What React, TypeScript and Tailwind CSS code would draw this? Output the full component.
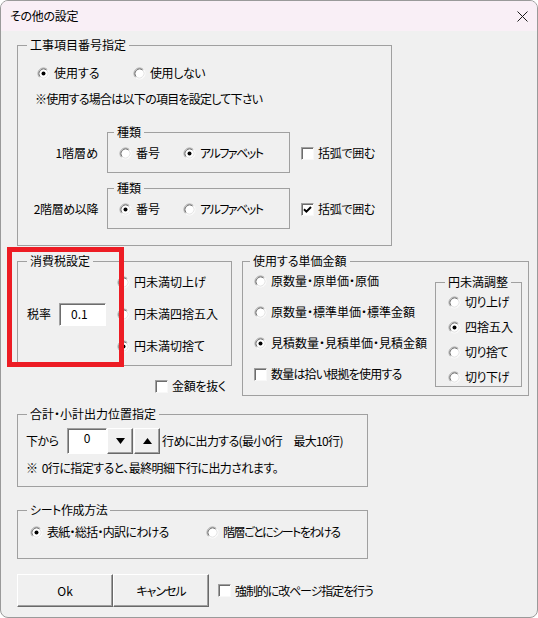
import React from "react";
import clsx from "clsx";

const RadioIcon = ({ checked }: { checked?: boolean }) => (
  <svg width="13" height="13" viewBox="0 0 13 13" className="shrink-0">
    <circle cx="6.5" cy="6.5" r="5" fill="#fff" />
    <path d="M2.61 10.39 A5.5 5.5 0 0 1 10.39 2.61" stroke="#a0a0a0" fill="none" />
    <path d="M10.39 2.61 A5.5 5.5 0 0 1 2.61 10.39" stroke="#ffffff" fill="none" />
    <path d="M3.32 9.68 A4.5 4.5 0 0 1 9.68 3.32" stroke="#6d6d6d" fill="none" />
    <path d="M9.68 3.32 A4.5 4.5 0 0 1 3.32 9.68" stroke="#e3e3e3" fill="none" />
    {checked && <circle cx="6.5" cy="6.5" r="2" fill="#000" />}
  </svg>
);

const Radio = ({ label, checked, className }: { label: string; checked?: boolean; className?: string }) => (
  <div className={clsx("flex items-center h-4 leading-4 whitespace-nowrap", className)}>
    <RadioIcon checked={checked} />
    <span className="ml-[4px]">{label}</span>
  </div>
);

const Checkbox = ({ label, checked, className }: { label: string; checked?: boolean; className?: string }) => (
  <div className={clsx("flex items-center h-4 leading-4 whitespace-nowrap", className)}>
    <div className="w-[13px] h-[13px] shrink-0 bg-white border border-[#a0a0a0] border-b-[#f8f8f8] border-r-[#f8f8f8] shadow-[inset_1px_1px_0_#6d6d6d] flex items-center justify-center">
      {checked && (
        <svg width="9" height="9" viewBox="0 0 9 9">
          <path d="M1 4.2 L3.4 6.6 L8 2" stroke="#000" strokeWidth="2" fill="none" />
        </svg>
      )}
    </div>
    <span className="ml-[4px]">{label}</span>
  </div>
);

const Group = ({
  title,
  className,
  legendClass,
  children,
}: {
  title: string;
  className?: string;
  legendClass?: string;
  children?: React.ReactNode;
}) => (
  <fieldset className={clsx("border border-[#a0a0a0] min-w-0 shrink-0", className)}>
    <legend className={clsx("px-[3px] leading-4", legendClass ?? "ml-[9px]")}>{title}</legend>
    {children}
  </fieldset>
);

const btn3d =
  "bg-[#f0f0f0] border border-t-white border-l-white border-b-[#696969] border-r-[#696969] shadow-[inset_-1px_-1px_0_#a0a0a0]";

const sunken =
  "bg-white border border-[#a0a0a0] border-b-white border-r-white shadow-[inset_1px_1px_0_#6d6d6d]";

export default function App() {
  return (
    <div className="relative w-[538px] h-[618px] bg-[#f0f0f0] border border-[#9a9a9a] rounded-[8px] overflow-hidden text-[12px] text-black font-['Noto_Sans_CJK_JP','Noto_Sans',sans-serif] [font-feature-settings:'palt']">
      {/* Title bar */}
      <div className="h-[30px] bg-[#f9eff6] flex items-center justify-between pl-[9px] pr-[9px]">
        <span className="leading-4 tracking-[-0.3px]">その他の設定</span>
        <svg width="11" height="11" viewBox="0 0 11 11">
          <path d="M0.5 0.5 L10.5 10.5 M10.5 0.5 L0.5 10.5" stroke="#1a1a1a" strokeWidth="1" />
        </svg>
      </div>

      <div className="pl-[16px]">
        {/* 工事項目番号指定 */}
        <Group title="工事項目番号指定" className="w-[375px] h-[209px] mt-[6px]">
          <div className="flex ml-[19px] mt-[12px]">
            <Radio label="使用する" checked className="w-[96px]" />
            <Radio label="使用しない" className="tracking-[-0.4px]" />
          </div>
          <div className="ml-[17px] mt-[10px] leading-4 tracking-[-0.75px]">※使用する場合は以下の項目を設定して下さい</div>

          <div className="flex items-start mt-[17px]">
            <div className="w-[80px] mr-[9px] mt-[21px] text-right leading-4">1階層め</div>
            <Group title="種類" className="w-[183px] h-[49px]" legendClass="ml-[6px]">
              <div className="flex ml-[11px] mt-[5px]">
                <Radio label="番号" className="w-[64px]" />
                <Radio label="アルファベット" checked className="tracking-[-1.5px]" />
              </div>
            </Group>
            <Checkbox label="括弧で囲む" className="ml-[11px] mt-[21px] tracking-[-0.3px]" />
          </div>

          <div className="flex items-start mt-[7px]">
            <div className="w-[80px] mr-[9px] mt-[21px] text-right leading-4 tracking-[-0.4px]">2階層め以降</div>
            <Group title="種類" className="w-[183px] h-[49px]" legendClass="ml-[6px]">
              <div className="flex ml-[11px] mt-[5px]">
                <Radio label="番号" checked className="w-[64px]" />
                <Radio label="アルファベット" className="tracking-[-1.5px]" />
              </div>
            </Group>
            <Checkbox label="括弧で囲む" checked className="ml-[11px] mt-[21px] tracking-[-0.3px]" />
          </div>
        </Group>

        {/* 消費税 / 単価金額 */}
        <div className="flex items-start mt-[7px]">
          <div className="w-[215px] shrink-0">
            <Group title="消費税設定" className="w-[215px] h-[113px]">
              <div className="flex items-center ml-[9px] mt-[5px]">
                <span className="leading-4 w-[32px]">税率</span>
                <div className={clsx(sunken, "w-[47px] h-[23px] pl-[11px] flex items-center leading-4")}>0.1</div>
                <div className="flex flex-col gap-[16px] ml-[11px]">
                  <Radio label="円未満切上げ" />
                  <Radio label="円未満四捨五入" />
                  <Radio label="円未満切捨て" checked />
                </div>
              </div>
            </Group>
            <Checkbox label="金額を抜く" className="ml-[138px] mt-[12px] tracking-[-0.3px]" />
          </div>

          <Group title="使用する単価金額" className="w-[287px] h-[143px] ml-[10px]" legendClass="ml-[7px]">
            <div className="flex items-start">
              <div className="w-[181px] ml-[11px] mt-[4px] flex flex-col gap-[15px]">
                <Radio label="原数量・原単価・原価" />
                <Radio label="原数量・標準単価・標準金額" />
                <Radio label="見積数量・見積単価・見積金額" checked />
                <Checkbox label="数量は拾い根拠を使用する" className="tracking-[-0.8px]" />
              </div>
              <Group title="円未満調整" className="w-[87px] h-[113px] mt-[5px]" legendClass="ml-[9px]">
                <div className="ml-[12px] mt-[4px] flex flex-col gap-[9px]">
                  <Radio label="切り上げ" className="tracking-[-0.5px]" />
                  <Radio label="四捨五入" checked />
                  <Radio label="切り捨て" className="tracking-[-0.5px]" />
                  <Radio label="切り下げ" className="tracking-[-0.5px]" />
                </div>
              </Group>
            </div>
          </Group>
        </div>

        {/* 合計・小計出力位置指定 */}
        <Group title="合計・小計出力位置指定" className="w-[351px] h-[81px] mt-[10px]">
          <div className="flex items-center ml-[8px] mt-[6px]">
            <span className="w-[41px] leading-4 tracking-[-0.5px]">下から</span>
            <div className={clsx(sunken, "w-[40px] h-[26px] text-center pt-[1px] leading-4")}>0</div>
            <button className={clsx(btn3d, "w-[26px] h-[26px] flex items-center justify-center")}>
              <svg width="9" height="6" viewBox="0 0 9 6">
                <path d="M0 0 H9 L4.5 6 Z" fill="#000" />
              </svg>
            </button>
            <button className={clsx(btn3d, "w-[26px] h-[26px] ml-[1px] flex items-center justify-center")}>
              <svg width="9" height="6" viewBox="0 0 9 6">
                <path d="M0 6 H9 L4.5 0 Z" fill="#000" />
              </svg>
            </button>
            <span className="ml-[2px] leading-4 whitespace-nowrap tracking-[-0.65px]">行めに出力する(最小0行　最大10行)</span>
          </div>
          <div className="ml-[8px] mt-[6px] leading-4 tracking-[-0.55px] whitespace-pre">※  0行に指定すると、最終明細下行に出力されます。</div>
        </Group>

        {/* シート作成方法 */}
        <Group title="シート作成方法" className="w-[351px] h-[57px] mt-[15px]" legendClass="ml-[9px] tracking-[-0.4px]">
          <div className="flex ml-[12px] mt-[6px]">
            <Radio label="表紙・総括・内訳にわける" checked className="w-[176px] tracking-[-0.7px]" />
            <Radio label="階層ごとにシートをわける" className="tracking-[-1.5px]" />
          </div>
        </Group>

        {/* Buttons */}
        <div className="flex items-center mt-[15px]">
          <button className={clsx(btn3d, "w-[96px] h-[33px] leading-4")}>Ok</button>
          <button className={clsx(btn3d, "w-[96px] h-[33px] leading-4 tracking-[-1px]")}>キャンセル</button>
          <Checkbox label="強制的に改ページ指定を行う" className="ml-[9px] tracking-[-1.1px]" />
        </div>
      </div>

      {/* red annotation frame */}
      <div className="absolute left-[6px] top-[246px] w-[117px] h-[120px] border-[5px] border-[#ed1c24] pointer-events-none" />
    </div>
  );
}
